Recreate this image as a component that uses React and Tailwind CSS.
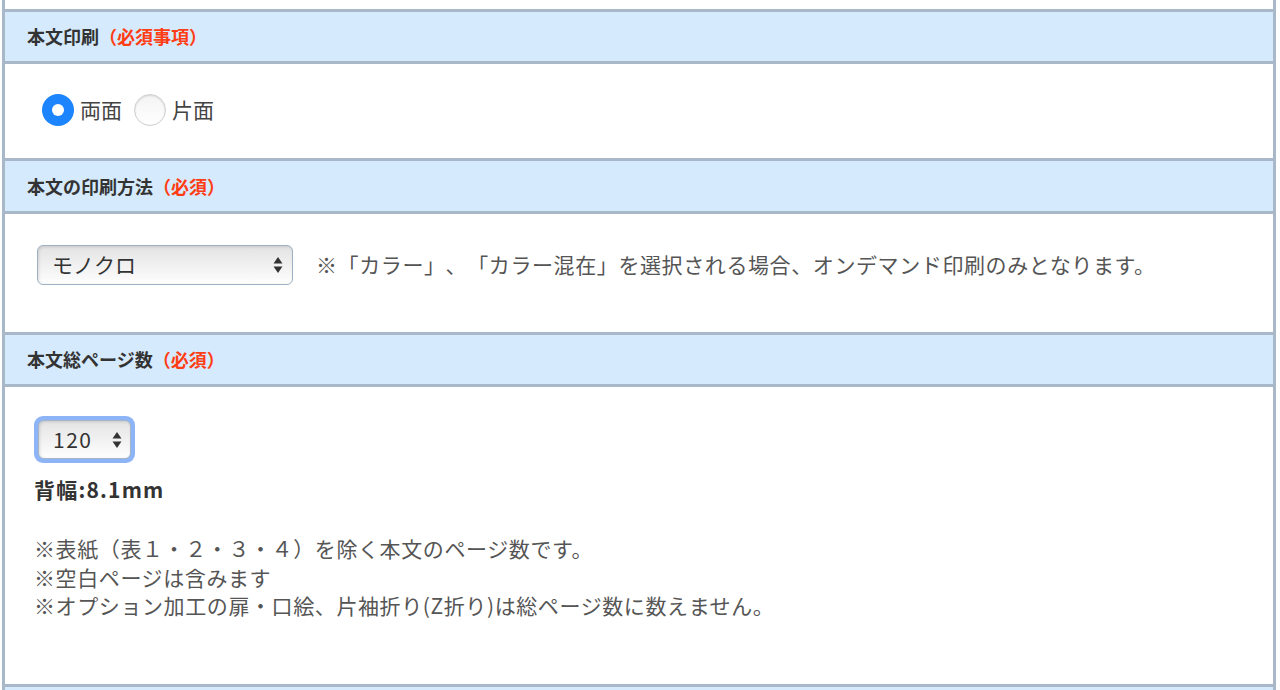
import React from "react";

const font = { fontFamily: '"Noto Sans CJK JP", "Noto Sans", sans-serif' };

function Arrows() {
  return (
    <svg width="10" height="18" viewBox="0 0 10 18" className="shrink-0">
      <path d="M5 1 L9.5 7.5 L0.5 7.5 Z" fill="#333" />
      <path d="M5 17 L9.5 10.5 L0.5 10.5 Z" fill="#333" />
    </svg>
  );
}

function SectionHeader({ title, note, h }) {
  return (
    <div className={`border-y-[3px] border-[#a8b8c9] bg-[#d5eafd] flex items-center pl-[22px] ${h}`}>
      <span className="text-[18px] font-bold text-[#333]">{title}</span>
      <span className="text-[18px] font-bold text-[#ff3d14]">{note}</span>
    </div>
  );
}

function Radio({ checked, label }) {
  return (
    <label className="flex items-center">
      {checked ? (
        <span className="w-[32px] h-[32px] rounded-full bg-[#1c84fc] flex items-center justify-center">
          <span className="w-[12px] h-[12px] rounded-full bg-white" />
        </span>
      ) : (
        <span className="w-[32px] h-[32px] rounded-full border border-[#cfcfcf] bg-linear-to-b from-[#f4f4f4] to-white shadow-[inset_0_1px_2px_rgba(0,0,0,0.12)]" />
      )}
      <span className="ml-[6px] text-[21px] text-[#444]">{label}</span>
    </label>
  );
}

export default function App() {
  return (
    <div className="w-[1280px] h-[690px] overflow-hidden bg-white [text-spacing-trim:space-all]" style={font}>
      <div className="ml-[2px] w-[1274px] border-x-[3px] border-[#a8b8c9]">
        <div className="h-[9px] bg-white" />

        <SectionHeader title="本文印刷" note="（必須事項）" h="h-[55px]" />
        <div className="h-[94px] flex items-center pl-[37px] pb-[2px] gap-[12px]">
          <Radio checked label="両面" />
          <Radio label="片面" />
        </div>

        <SectionHeader title="本文の印刷方法" note="（必須）" h="h-[56px]" />
        <div className="h-[118px] flex items-center pl-[32px] pb-[16px]">
          <div className="w-[256px] h-[40px] rounded-[6px] border border-[#9fb1c4] bg-linear-to-b from-[#e3e3e3] to-[#fefefe] shadow-[inset_1px_1px_3px_rgba(0,0,0,0.12)] flex items-center justify-between pl-[14px] pr-[9px]">
            <span className="text-[21px] text-[#333]">モノクロ</span>
            <Arrows />
          </div>
          <p className="ml-[23px] text-[21px] text-[#555] tracking-[0.6px]">
            ※「カラー」、「カラー混在」を選択される場合、オンデマンド印刷のみとなります。
          </p>
        </div>

        <SectionHeader title="本文総ページ数" note="（必須）" h="h-[55px]" />
        <div className="h-[297px] pl-[29px] pt-[29px]">
          <div className="w-[101px] h-[47px] rounded-[9px] bg-[#8db4f7] p-[4px]">
            <div className="w-full h-full rounded-[6px] border border-[#a6b6c8] bg-linear-to-b from-[#e4e4e4] to-[#fefefe] shadow-[inset_1px_1px_3px_rgba(0,0,0,0.12)] flex items-center justify-between pl-[14px] pr-[8px]">
              <span className="text-[21px] text-[#333] tracking-[1.5px]">120</span>
              <Arrows />
            </div>
          </div>
          <p className="mt-[11px] text-[21px] font-bold text-[#333] leading-[30px] tracking-[1.2px]">背幅:8.1mm</p>
          <div className="mt-[30px] text-[21px] text-[#555] leading-[28.5px] tracking-[0.6px]">
            <p>※表紙（表１・２・３・４）を除く本文のページ数です。</p>
            <p>※空白ページは含みます</p>
            <p>※オプション加工の扉・口絵、片袖折り(Z折り)は総ページ数に数えません。</p>
          </div>
        </div>

        <SectionHeader title="" note="" h="h-[20px]" />
      </div>
    </div>
  );
}
